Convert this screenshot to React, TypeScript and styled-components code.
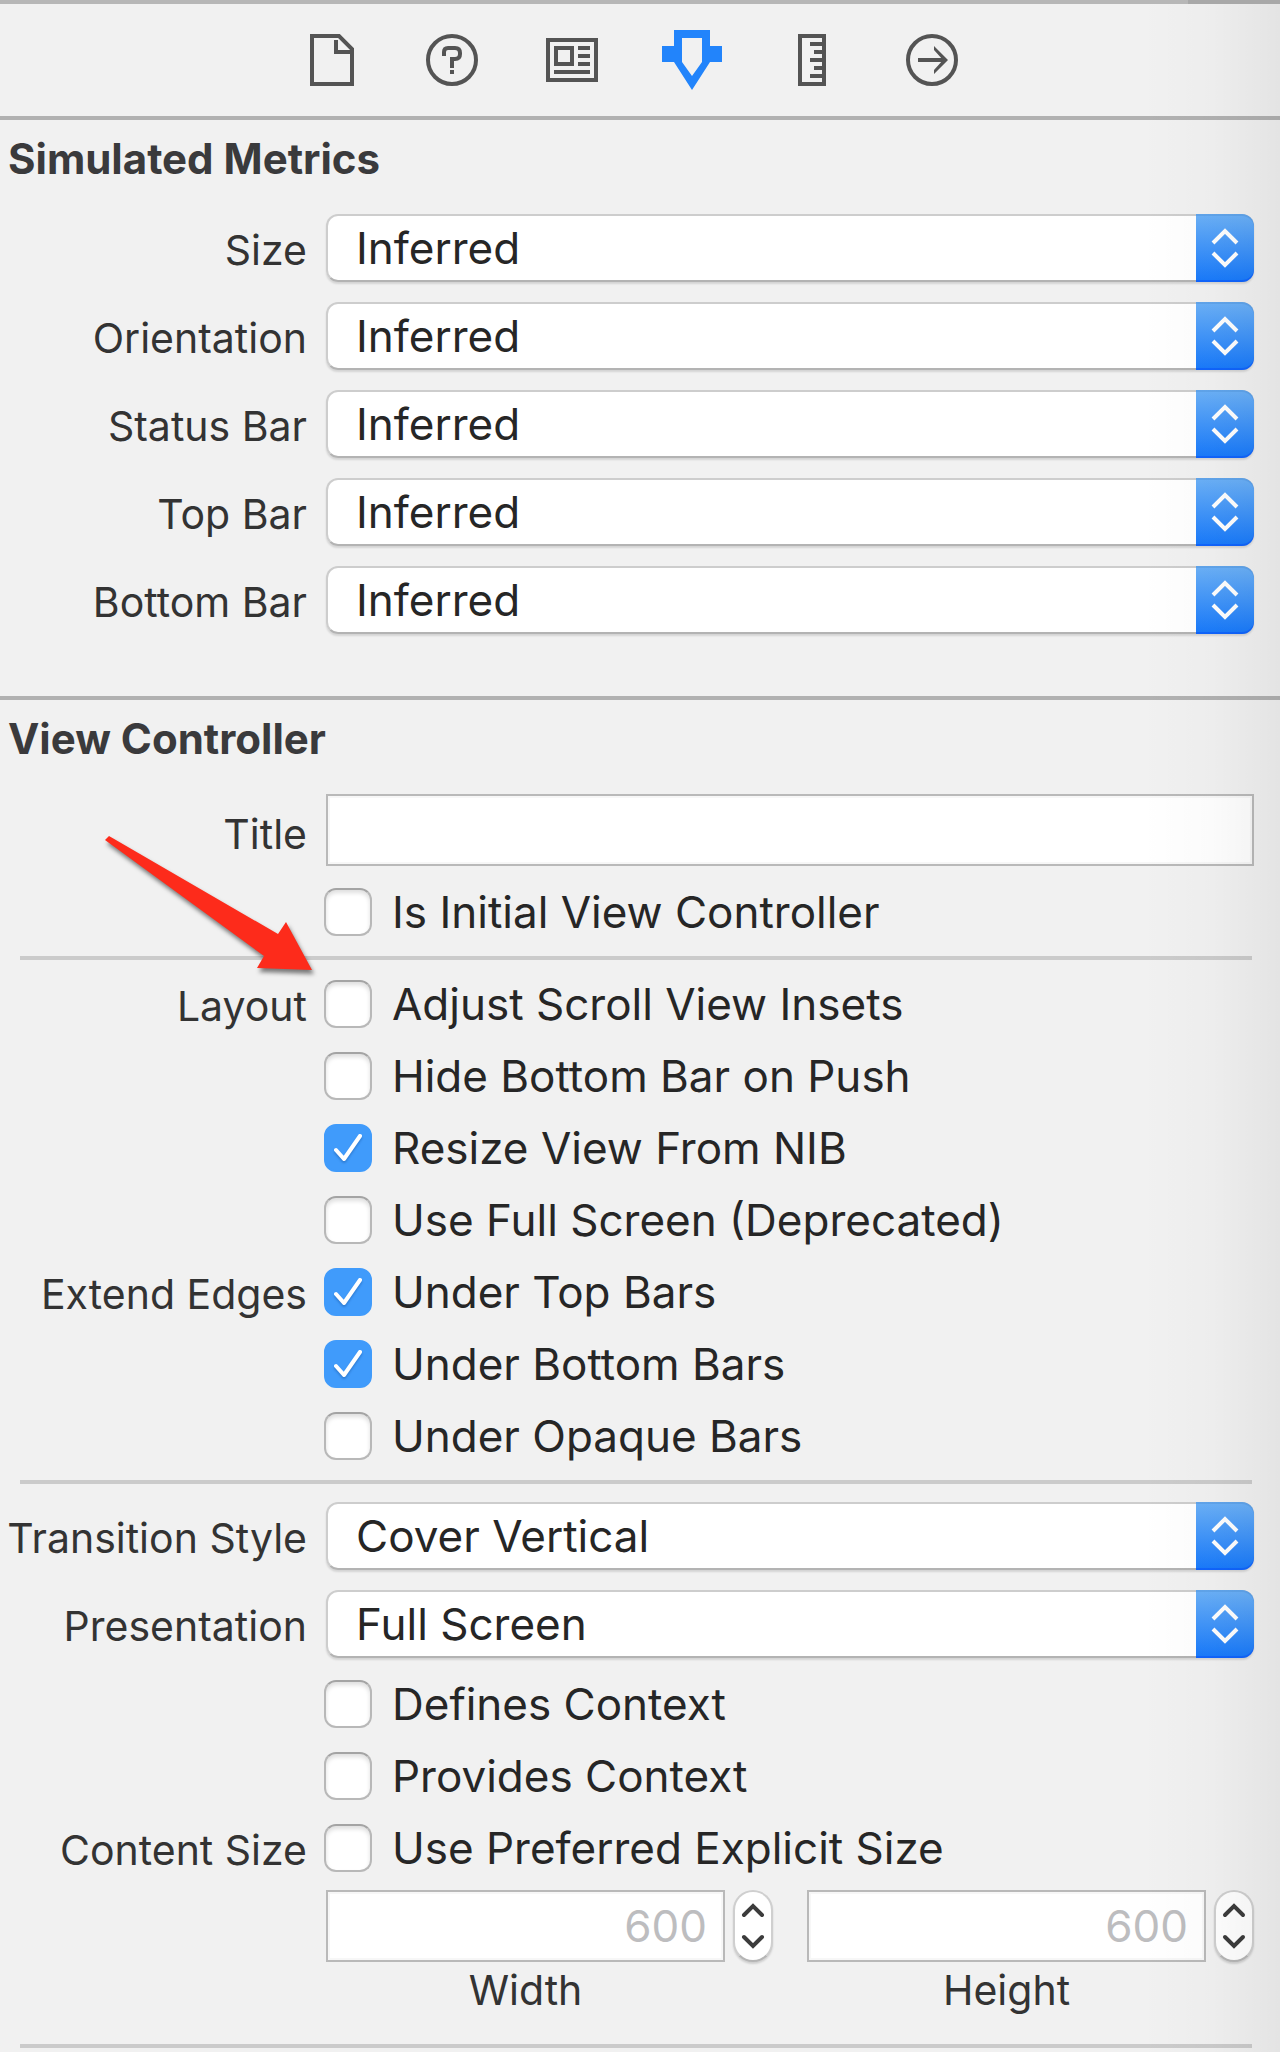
import React, { useId, useState } from "react";
import styled, { createGlobalStyle, css } from "styled-components";

const GlobalStyle = createGlobalStyle`
  *, *::before, *::after { box-sizing: border-box; }
  body {
    margin: 0;
    background: #f1f1f1;
    font-family: Inter, "Liberation Sans", sans-serif;
    color: #262626;
  }
  button, input, select { font: inherit; color: inherit; margin: 0; }
`;

const Inspector = styled.main`
  position: relative;
  min-width: 900px;
  padding-bottom: 4px;

  &::after {
    content: "";
    position: absolute;
    inset: 4px 0 0 auto;
    width: 140px;
    pointer-events: none;
    background: linear-gradient(to right, transparent, rgba(0, 0, 0, 0.015) 50%, rgba(0, 0, 0, 0.055));
  }
`;

const Toolbar = styled.nav`
  display: flex;
  justify-content: center;
  align-items: center;
  gap: 60px;
  height: 116px;
  padding: 4px 16px 0 0;
  background: linear-gradient(to right, #b7b7b7 calc(100% - 92px), #a8a8a8 calc(100% - 92px)) top / 100% 4px no-repeat;
`;

const ToolButton = styled.button<{ $active?: boolean }>`
  width: 60px;
  height: 60px;
  padding: 0;
  border: 0;
  background: none;
  color: ${(p) => (p.$active ? "#2284fb" : "#545454")};

  svg {
    display: block;
    width: 60px;
    height: 60px;
  }
`;

const Section = styled.section<{ $bottom?: number }>`
  position: relative;
  border-top: 4px solid #b1b1b1;
  padding: 14px 26px ${(p) => p.$bottom ?? 0}px 0;
`;

const Heading = styled.h2`
  margin: 0 0 30px;
  padding-left: 8px;
  font-size: 42px;
  line-height: 50px;
  font-weight: 700;
  color: #3a3a3c;
`;

const Stack = styled.div<{ $gap: number }>`
  display: flex;
  flex-direction: column;
  gap: ${(p) => p.$gap}px;
`;

const Row = styled.div`
  display: grid;
  grid-template-columns: 307px minmax(0, 1fr);
  column-gap: 17px;
  align-items: center;
`;

const rowLabel = css`
  padding-top: 4px;
  font-size: 41px;
  line-height: 44px;
  text-align: right;
  white-space: nowrap;
  color: #333;
`;

const RowLabel = styled.label<{ $drop?: number }>`
  ${rowLabel}
  padding-top: ${(p) => p.$drop ?? 4}px;
`;

const GroupLabel = styled.span`
  ${rowLabel}
`;

const Divider = styled.hr<{ $above?: number; $below?: number }>`
  height: 4px;
  margin: ${(p) => p.$above ?? 20}px 2px ${(p) => p.$below ?? 20}px 20px;
  border: 0;
  background: #cbcbcb;
`;

const PopUp = styled.div`
  display: grid;
  height: 68px;
  margin-left: 2px;
  border-radius: 12px;
  box-shadow: 0 2px 2px rgba(0, 0, 0, 0.12);
`;

const PopUpSelect = styled.select`
  grid-area: 1 / 1;
  appearance: none;
  width: 100%;
  height: 68px;
  padding: 0 70px 0 28px;
  border: 2px solid #cdcdcd;
  border-bottom-color: #b3b3b3;
  border-radius: 12px;
  background: #fff;
  font-size: 44px;
  line-height: 64px;
`;

const PopUpArrows = styled.span`
  grid-area: 1 / 1;
  justify-self: end;
  display: grid;
  place-items: center;
  width: 58px;
  height: 68px;
  border-radius: 0 12px 12px 0;
  background: linear-gradient(#6cb1f7, #1779fb);
  box-shadow: inset 0 -2px 0 rgba(0, 60, 255, 0.35), inset 0 2px 0 rgba(0, 60, 140, 0.1);
  pointer-events: none;
`;

const TextField = styled.input`
  display: block;
  width: 100%;
  height: 72px;
  padding: 0 16px;
  border: 2px solid #b9b9b9;
  border-radius: 0;
  background: #fff;
  box-shadow: inset 0 0 0 2px #f7f7f7;
  font-size: 44px;
`;

const FieldSlot = styled.div`
  margin-left: 2px;
`;

const CheckLabel = styled.label`
  display: flex;
  align-items: center;
  gap: 20px;
  height: 48px;
  font-size: 44px;
  line-height: 48px;
  white-space: nowrap;
`;

const CheckSlot = styled.span`
  display: grid;
  flex: none;

  svg {
    grid-area: 1 / 1;
    width: 48px;
    height: 48px;
    pointer-events: none;
    visibility: hidden;
    filter: drop-shadow(0 2px 1px rgba(0, 50, 120, 0.3));
  }

  input:checked + svg {
    visibility: visible;
  }
`;

const CheckInput = styled.input`
  grid-area: 1 / 1;
  appearance: none;
  width: 48px;
  height: 48px;
  border: 2px solid #b8b8b8;
  border-top-color: #a4a4a4;
  border-radius: 12px;
  background: #fff;
  box-shadow: inset 0 3px 4px rgba(0, 0, 0, 0.13);

  &:checked {
    border-color: #409bfb;
    background: #409bfb;
    box-shadow: none;
  }
`;

const SizeFields = styled.div`
  display: grid;
  grid-template-columns: 1fr 1fr;
  column-gap: 34px;
  margin-left: 2px;
`;

const SizeField = styled.div`
  display: grid;
  grid-template-columns: minmax(0, 1fr) 40px;
  column-gap: 8px;
  row-gap: 4px;

  input {
    color: #bdbdbf;
    text-align: right;
  }
`;

const Caption = styled.label`
  font-size: 41px;
  line-height: 48px;
  text-align: center;
  color: #333;
`;

const Stepper = styled.div`
  display: flex;
  flex-direction: column;
  height: 72px;
  border: 2px solid #cfcfcf;
  border-bottom-color: #b5b5b5;
  border-radius: 20px;
  background: #fff;
  box-shadow: 0 2px 2px rgba(0, 0, 0, 0.14);
`;

const StepButton = styled.button`
  flex: 1;
  min-height: 0;
  padding: 0;
  border: 0;
  background: none;
  color: #3c3c3c;

  svg {
    display: block;
    width: 36px;
    height: 34px;
  }
`;

const Pointer = styled.svg`
  position: absolute;
  left: 100px;
  top: 130px;
  width: 224px;
  height: 150px;
  pointer-events: none;
  filter: drop-shadow(2px 4px 2px rgba(0, 0, 0, 0.5));
`;

const FileIcon = () => (
  <svg viewBox="0 0 60 60" fill="none" stroke="currentColor" strokeWidth="4">
    <path d="M10 6H37L50 19V54H10Z" />
    <path d="M34 10V22H48" />
  </svg>
);

const HelpIcon = () => (
  <svg viewBox="0 0 60 60" fill="none" stroke="currentColor" strokeWidth="4">
    <circle cx="30" cy="30" r="24" />
    <path d="M22 26V22Q22 18 26 18H33Q38 18 38 23V24Q38 29 33 29H30V38" />
    <path d="M28 42H32" />
  </svg>
);

const IdentityIcon = () => (
  <svg viewBox="0 0 60 60" fill="none" stroke="currentColor" strokeWidth="4">
    <rect x="6" y="10" width="48" height="40" />
    <rect x="14" y="18" width="16" height="16" />
    <path d="M36 18H48M36 26H48M36 34H48M12 42H48" />
  </svg>
);

const AttributesIcon = () => (
  <svg viewBox="0 0 60 60" fill="currentColor">
    <path
      fillRule="evenodd"
      d="M12 0H48V16H60V32H48L30 60L12 32H0V16H12ZM20 8V32L30 46L40 32V8Z"
    />
  </svg>
);

const SizeIcon = () => (
  <svg viewBox="0 0 60 60" fill="none" stroke="currentColor" strokeWidth="4">
    <rect x="18" y="6" width="24" height="48" />
    <path d="M28 14H42M32 22H42M28 30H42M32 38H42M28 46H42" />
  </svg>
);

const ConnectionsIcon = () => (
  <svg viewBox="0 0 60 60" fill="none" stroke="currentColor" strokeWidth="4">
    <circle cx="30" cy="30" r="24" />
    <path d="M16 30H44" />
    <path d="M32 16V20L41 30L32 40V44L46 30Z" fill="currentColor" stroke="none" />
  </svg>
);

const tools = [
  { name: "File inspector", Icon: FileIcon },
  { name: "Quick help", Icon: HelpIcon },
  { name: "Identity inspector", Icon: IdentityIcon },
  { name: "Attributes inspector", Icon: AttributesIcon },
  { name: "Size inspector", Icon: SizeIcon },
  { name: "Connections inspector", Icon: ConnectionsIcon },
];

function PopUpRow({ label, value }: { label: string; value: string }) {
  const id = useId();
  return (
    <Row>
      <RowLabel htmlFor={id}>{label}</RowLabel>
      <PopUp>
        <PopUpSelect id={id} defaultValue={value}>
          <option>{value}</option>
        </PopUpSelect>
        <PopUpArrows>
          <svg width="28" height="42" viewBox="0 0 28 42" fill="none" stroke="#fff" strokeWidth="4">
            <path d="M2 16L14 4L26 16M2 26L14 38L26 26" />
          </svg>
        </PopUpArrows>
      </PopUp>
    </Row>
  );
}

function CheckRow({ group, label, checked = false }: { group?: string; label: string; checked?: boolean }) {
  return (
    <Row>
      <GroupLabel>{group}</GroupLabel>
      <CheckLabel>
        <CheckSlot>
          <CheckInput type="checkbox" defaultChecked={checked} />
          <svg viewBox="0 0 48 48" fill="none" stroke="#fff" strokeWidth="4" strokeLinecap="round" strokeLinejoin="round">
            <path d="M12 26L20 35L36 12" />
          </svg>
        </CheckSlot>
        {label}
      </CheckLabel>
    </Row>
  );
}

function SizeInput({ label }: { label: string }) {
  const id = useId();
  const [value, setValue] = useState("600");
  const step = (by: number) => setValue((v) => String((Number(v) || 0) + by));
  return (
    <SizeField>
      <TextField id={id} inputMode="numeric" value={value} onChange={(e) => setValue(e.target.value)} />
      <Stepper>
        <StepButton aria-label={`Increase ${label}`} onClick={() => step(1)}>
          <svg viewBox="0 0 36 34" fill="none" stroke="currentColor" strokeWidth="4" strokeLinecap="round">
            <path d="M9 23L18 14L27 23" />
          </svg>
        </StepButton>
        <StepButton aria-label={`Decrease ${label}`} onClick={() => step(-1)}>
          <svg viewBox="0 0 36 34" fill="none" stroke="currentColor" strokeWidth="4" strokeLinecap="round">
            <path d="M9 11L18 20L27 11" />
          </svg>
        </StepButton>
      </Stepper>
      <Caption htmlFor={id}>{label}</Caption>
    </SizeField>
  );
}

export default function App() {
  const titleId = useId();
  return (
    <Inspector>
      <GlobalStyle />
      <Toolbar>
        {tools.map(({ name, Icon }) => (
          <ToolButton key={name} aria-label={name} $active={Icon === AttributesIcon}>
            <Icon />
          </ToolButton>
        ))}
      </Toolbar>

      <Section $bottom={62}>
        <Heading>Simulated Metrics</Heading>
        <Stack $gap={20}>
          {["Size", "Orientation", "Status Bar", "Top Bar", "Bottom Bar"].map((label) => (
            <PopUpRow key={label} label={label} value="Inferred" />
          ))}
        </Stack>
      </Section>

      <Section>
        <Heading>View Controller</Heading>
        <Stack $gap={22}>
          <Row>
            <RowLabel htmlFor={titleId} $drop={8}>Title</RowLabel>
            <FieldSlot>
              <TextField id={titleId} />
            </FieldSlot>
          </Row>
          <CheckRow label="Is Initial View Controller" />
        </Stack>
        <Divider />
        <Stack $gap={24}>
          <CheckRow group="Layout" label="Adjust Scroll View Insets" />
          <CheckRow label="Hide Bottom Bar on Push" />
          <CheckRow label="Resize View From NIB" checked />
          <CheckRow label="Use Full Screen (Deprecated)" />
          <CheckRow group="Extend Edges" label="Under Top Bars" checked />
          <CheckRow label="Under Bottom Bars" checked />
          <CheckRow label="Under Opaque Bars" />
        </Stack>
        <Divider $below={18} />
        <Stack $gap={22}>
          <Stack $gap={20}>
            <PopUpRow label="Transition Style" value="Cover Vertical" />
            <PopUpRow label="Presentation" value="Full Screen" />
          </Stack>
          <Stack $gap={18}>
            <Stack $gap={24}>
              <CheckRow label="Defines Context" />
              <CheckRow label="Provides Context" />
              <CheckRow group="Content Size" label="Use Preferred Explicit Size" />
            </Stack>
            <Row>
              <span />
              <SizeFields>
                <SizeInput label="Width" />
                <SizeInput label="Height" />
              </SizeFields>
            </Row>
          </Stack>
        </Stack>
        <Divider $above={30} $below={0} />
        <Pointer viewBox="0 0 224 150">
          <path fill="#fd2b1b" d="M5 10L9 6L178 104L186 92L212 140L157 138L164 126Z" />
        </Pointer>
      </Section>
    </Inspector>
  );
}
